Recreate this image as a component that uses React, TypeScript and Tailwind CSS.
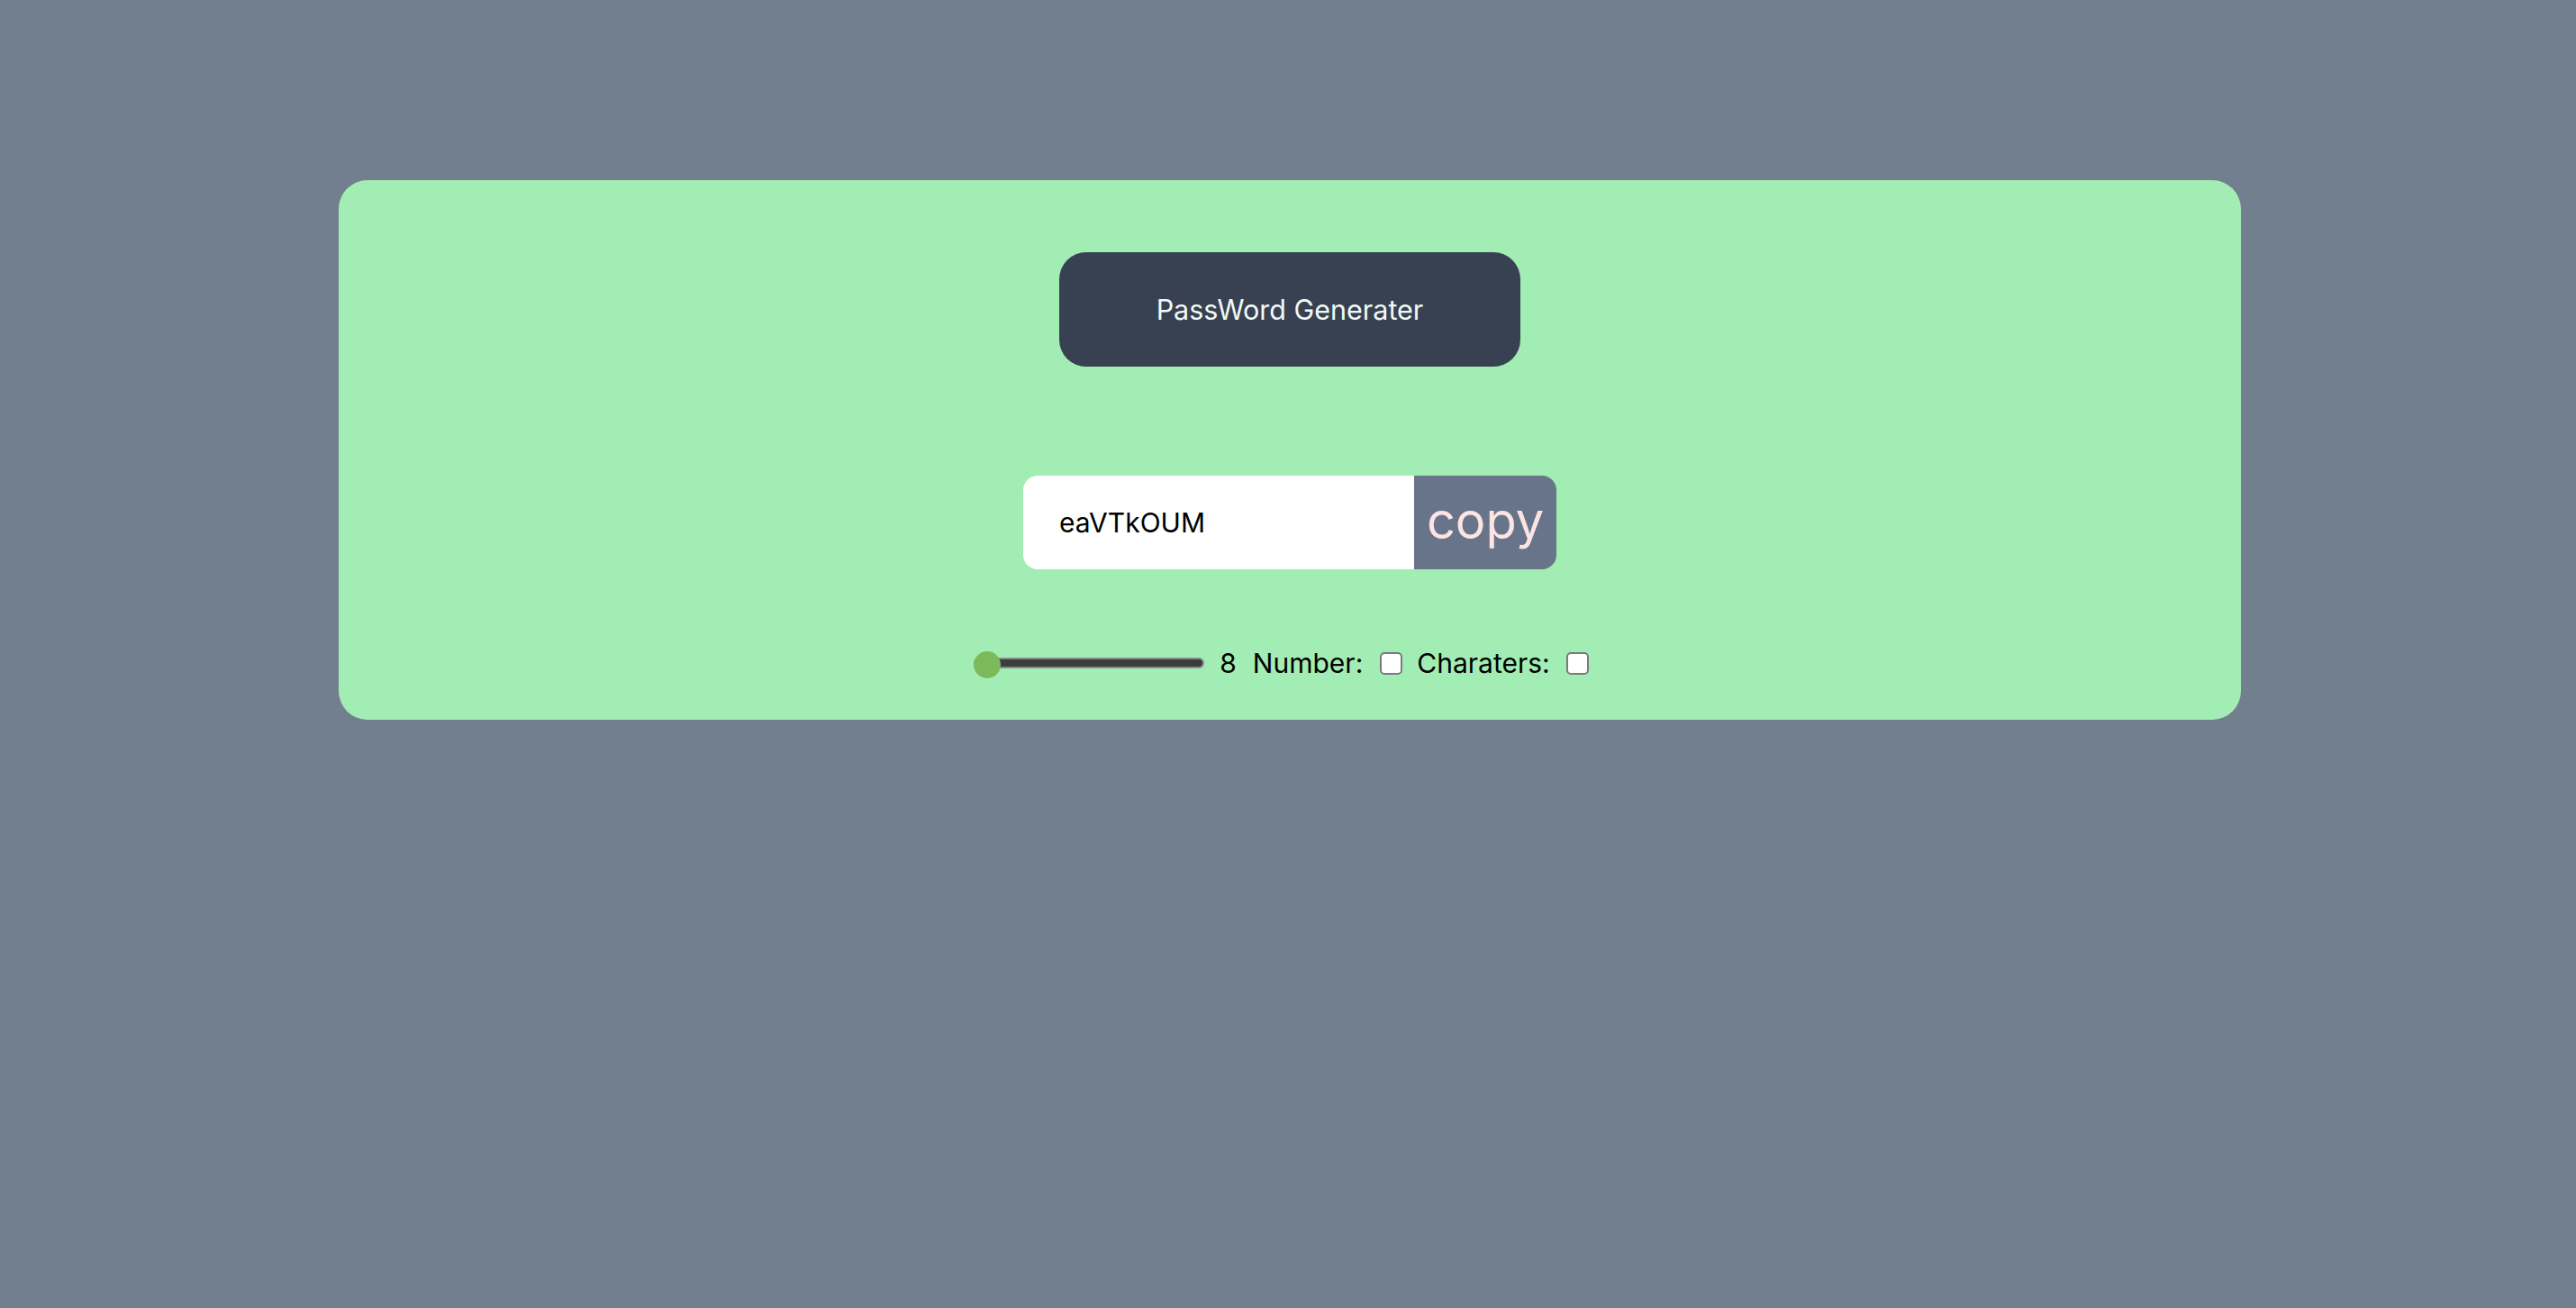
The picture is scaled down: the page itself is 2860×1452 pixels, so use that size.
import React, { useState } from "react";

export default function App() {
  const [length, setLength] = useState(8);
  const [numberAllowed, setNumberAllowed] = useState(false);
  const [charAllowed, setCharAllowed] = useState(false);
  const password = "eaVTkOUM";

  return (
    <div
      className="min-h-[1452px] w-full bg-[#727f8f] pl-[4px] pt-[200px]"
      style={{ fontFamily: "Inter, 'Noto Sans', sans-serif" }}
    >
      <div className="mx-auto flex w-[2112px] flex-col items-center rounded-[32px] bg-[#a2edb4] pt-[80px] pb-[47px]">
        <div className="flex h-[127px] w-[512px] items-center justify-center rounded-[30px] bg-[#374151] text-[30.5px] text-[#f0f9f7]">
          PassWord Generater
        </div>

        <div className="mt-[121px] flex h-[104px] w-[592px] overflow-hidden rounded-[16px]">
          <input
            type="text"
            value={password}
            readOnly
            className="h-full w-[434px] bg-white pl-[40px] text-[30px] text-black outline-none"
          />
          <button className="flex h-full w-[158px] items-center justify-center bg-[#687489] pb-[4px] text-[56px] leading-none text-[#fce4e4]">
            copy
          </button>
        </div>

        <div className="mt-[88px] flex h-[32px] items-center pr-[19px] text-[30px] text-black">
          <input
            type="range"
            min={8}
            max={100}
            value={length}
            onChange={(e) => setLength(Number(e.target.value))}
            className="h-[32px] w-[256px] cursor-pointer appearance-none bg-transparent [&::-webkit-slider-runnable-track]:h-[12px] [&::-webkit-slider-runnable-track]:rounded-full [&::-webkit-slider-runnable-track]:border-2 [&::-webkit-slider-runnable-track]:border-[#8a8a8a] [&::-webkit-slider-runnable-track]:bg-[#3c3c3c] [&::-webkit-slider-thumb]:mt-[-9px] [&::-webkit-slider-thumb]:ml-[-2px] [&::-webkit-slider-thumb]:h-[30px] [&::-webkit-slider-thumb]:w-[30px] [&::-webkit-slider-thumb]:appearance-none [&::-webkit-slider-thumb]:rounded-full [&::-webkit-slider-thumb]:bg-[#7bb95a]"
          />
          <span className="ml-[17px] leading-none">{length}</span>
          <label className="ml-[18px] leading-none">Number:</label>
          <input
            type="checkbox"
            checked={numberAllowed}
            onChange={() => setNumberAllowed(!numberAllowed)}
            className="ml-[19px] h-[25px] w-[25px] appearance-none rounded-[5px] border-2 border-[#7a7a7a] bg-white"
          />
          <label className="ml-[16px] leading-none">Charaters:</label>
          <input
            type="checkbox"
            checked={charAllowed}
            onChange={() => setCharAllowed(!charAllowed)}
            className="ml-[18px] h-[25px] w-[25px] appearance-none rounded-[5px] border-2 border-[#7a7a7a] bg-white"
          />
        </div>
      </div>
    </div>
  );
}
